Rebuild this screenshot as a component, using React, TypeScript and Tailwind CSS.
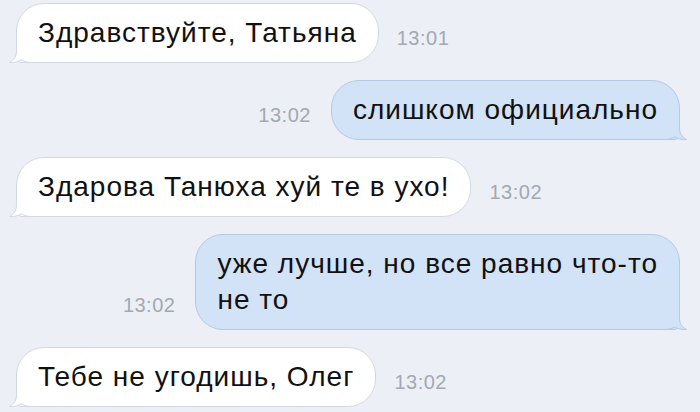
import React from "react";

const FONT = { fontFamily: '"Liberation Sans", Arial, sans-serif' };

function Tail({ out }: { out?: boolean }) {
  const fill = out ? "#d2e2f7" : "#ffffff";
  const stroke = out ? "#b7c9e2" : "#d3d9e2";
  return (
    <svg
      width="24"
      height="24"
      viewBox="0 0 24 24"
      className={
        out
          ? "absolute right-[-8px] bottom-[-1px] -scale-x-100"
          : "absolute left-[-8px] bottom-[-1px]"
      }
    >
      <path
        d="M7.5,0 L7.5,12 C7.5,17 5.5,21 0.5,23.5 C5,23.8 9.5,22.8 12.5,20.8 C15,22.8 18.5,23.5 24,23.5 L24,0 Z"
        fill={fill}
      />
      <path
        d="M7.5,0 L7.5,12 C7.5,17 5.5,21 0.5,23.5 C5,23.8 9.5,22.8 12.5,20.8 C15,22.8 18.5,23.5 24,23.5"
        fill="none"
        stroke={stroke}
        strokeWidth="1"
      />
    </svg>
  );
}

function Time({ t }: { t: string }) {
  return (
    <div
      className="text-[20px] leading-[22px] tracking-[0.5px] text-[#a2a9b2] mb-[14px] shrink-0"
      style={FONT}
    >
      {t}
    </div>
  );
}

function In({ text, time }: { text: React.ReactNode; time: string }) {
  return (
    <div className="flex items-end pl-[16px] gap-[18px]">
      <div
        className="relative bg-white border border-[#d3d9e2] rounded-[28px] rounded-bl-[6px] px-[21px] py-[11px] text-[28px] leading-[36px] tracking-[1px] text-[#111]"
        style={FONT}
      >
        {text}
        <Tail />
      </div>
      <Time t={time} />
    </div>
  );
}

function Out({ text, time }: { text: React.ReactNode; time: string }) {
  return (
    <div className="flex items-end justify-end pr-[20px] gap-[20px]">
      <Time t={time} />
      <div
        className="relative bg-[#d2e2f7] border border-[#b7c9e2] rounded-[28px] rounded-br-[6px] px-[21px] py-[11px] text-[28px] leading-[36px] tracking-[1px] text-[#111]"
        style={FONT}
      >
        {text}
        <Tail out />
      </div>
    </div>
  );
}

export default function App() {
  return (
    <div className="w-[700px] h-[412px] overflow-hidden bg-[#ecf0f6] pt-[3px] flex flex-col gap-[17px]">
      <In text="Здравствуйте, Татьяна" time="13:01" />
      <Out text="слишком официально" time="13:02" />
      <In text="Здарова Танюха хуй те в ухо!" time="13:02" />
      <Out
        text={
          <>
            уже лучше, но все равно что-то
            <br />
            не то
          </>
        }
        time="13:02"
      />
      <In text="Тебе не угодишь, Олег" time="13:02" />
    </div>
  );
}
